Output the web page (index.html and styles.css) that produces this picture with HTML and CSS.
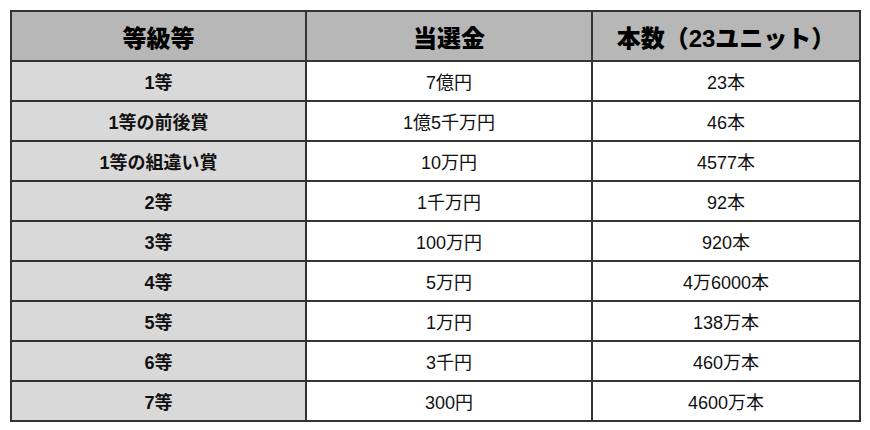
FILE: index.html
```html
<!DOCTYPE html>
<html lang="ja">
<head>
<meta charset="utf-8">
<link rel="stylesheet" href="styles.css">
</head>
<body>
<table class="prize">
  <colgroup>
    <col class="c1"><col class="c2"><col class="c3">
  </colgroup>
  <thead>
    <tr><th>等級等</th><th>当選金</th><th>本数（23ユニット）</th></tr>
  </thead>
  <tbody>
    <tr><td class="grade">1等</td><td>7億円</td><td>23本</td></tr>
    <tr><td class="grade">1等の前後賞</td><td>1億5千万円</td><td>46本</td></tr>
    <tr><td class="grade">1等の組違い賞</td><td>10万円</td><td>4577本</td></tr>
    <tr><td class="grade">2等</td><td>1千万円</td><td>92本</td></tr>
    <tr><td class="grade">3等</td><td>100万円</td><td>920本</td></tr>
    <tr><td class="grade">4等</td><td>5万円</td><td>4万6000本</td></tr>
    <tr><td class="grade">5等</td><td>1万円</td><td>138万本</td></tr>
    <tr><td class="grade">6等</td><td>3千円</td><td>460万本</td></tr>
    <tr><td class="grade">7等</td><td>300円</td><td>4600万本</td></tr>
  </tbody>
</table>
</body>
</html>
```
FILE: styles.css
```css
html, body {
  margin: 0;
  padding: 0;
  background: #ffffff;
}
body {
  padding: 10px 0 0 10px;
  font-family: "Liberation Sans", "Noto Sans CJK JP", sans-serif;
  color: #111;
}
.prize {
  border-collapse: collapse;
  width: 849px;
  table-layout: fixed;
}
.c1 { width: 295px; }
.c2 { width: 286px; }
.c3 { width: 268px; }
.prize th,
.prize td {
  border: 2px solid #333;
  text-align: center;
  padding: 0;
}
.prize th {
  background: #b7b7b7;
  height: 48px;
  font-size: 24px;
  font-weight: 900;
  color: #000;
}
.prize td {
  height: 38px;
  font-size: 18px;
  background: #fff;
}
.prize td.grade {
  background: #d9d9d9;
  font-weight: bold;
}
```
